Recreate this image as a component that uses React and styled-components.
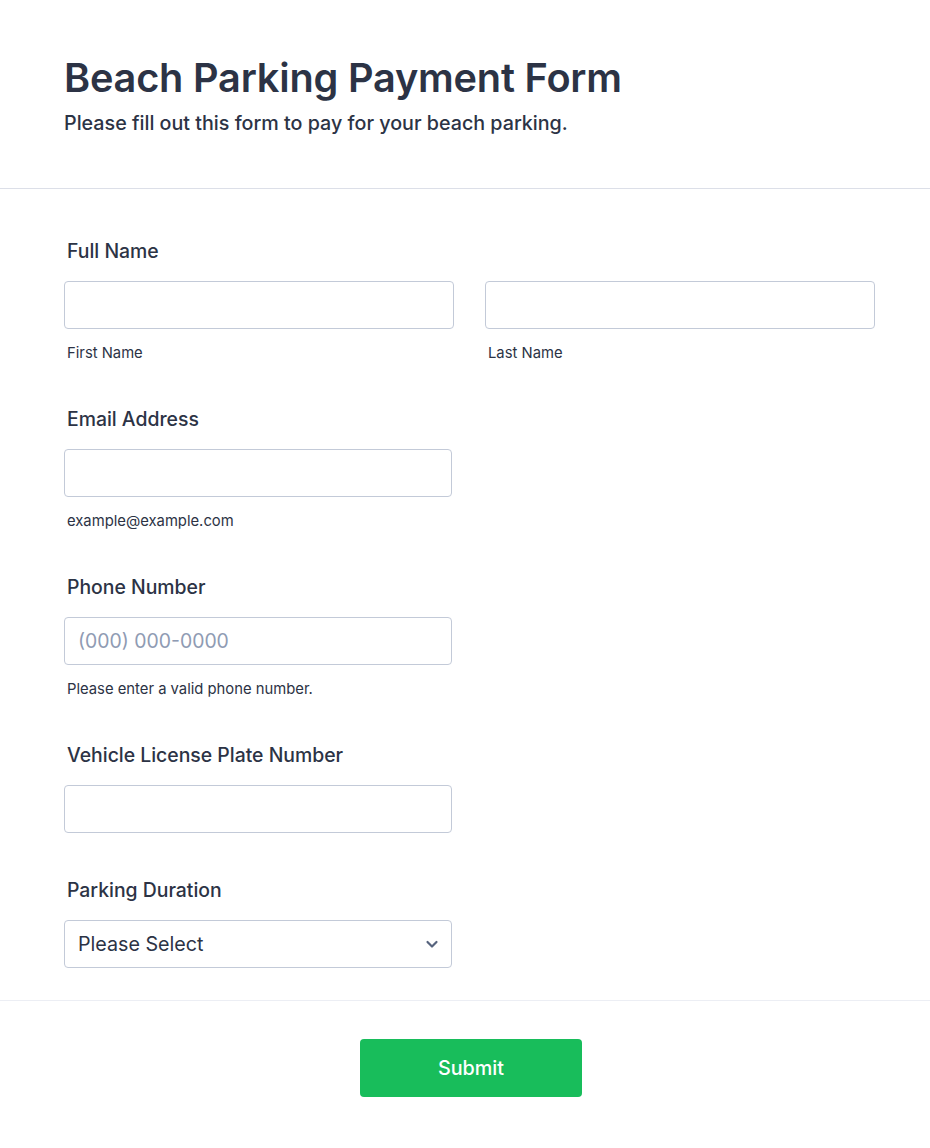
import React from "react"
import styled, { createGlobalStyle } from "styled-components"

const GlobalStyle = createGlobalStyle`
  html, body {
    margin: 0;
    padding: 0;
    background: #ffffff;
  }
  body {
    font-family: Inter, "Noto Sans", "Liberation Sans", sans-serif;
    color: #2c3345;
  }
  * {
    box-sizing: border-box;
  }
`

const Page = styled.div`
  width: 930px;
  min-height: 1148px;
  background: #ffffff;
  display: flex;
  flex-direction: column;
`

const Header = styled.header`
  padding: 54px 64px 53px;
  border-bottom: 1px solid #dcdfe8;
`

const Title = styled.h1`
  margin: 0;
  font-size: 39.7px;
  line-height: 48px;
  font-weight: 600;
  letter-spacing: -0.2px;
  color: #2c3345;
`

const Subtitle = styled.p`
  margin: 9px 0 0;
  font-size: 19.7px;
  line-height: 24px;
  font-weight: 500;
  color: #2c3345;
`

const Body = styled.section`
  padding: 50px 55px 32px 64px;
  display: flex;
  flex-direction: column;
  gap: 45px;
  border-bottom: 1px solid #eceef4;
`

const Field = styled.div`
  display: flex;
  flex-direction: column;
  width: ${({ $wide }) => ($wide ? "811px" : "388px")};
`

const Label = styled.label`
  display: block;
  padding-left: 3px;
  margin-bottom: 18px;
  font-size: 19.4px;
  line-height: 24px;
  font-weight: 500;
  color: #2c3345;
`

const Row = styled.div`
  display: grid;
  grid-template-columns: 390px 390px;
  column-gap: 31px;
`

const Column = styled.div`
  display: flex;
  flex-direction: column;
`

const Input = styled.input`
  width: 100%;
  height: 48px;
  border: 1px solid #c3cad8;
  border-radius: 4px;
  padding: 0 13px;
  font-family: inherit;
  font-size: 19.4px;
  color: #2c3345;
  background: #ffffff;
  outline: none;

  &::placeholder {
    color: #8f9bb3;
  }
`

const SubLabel = styled.span`
  display: block;
  margin-top: 15px;
  padding-left: 3px;
  font-size: 14.8px;
  line-height: 18px;
  color: #2c3345;
`

const SelectBox = styled.div`
  position: relative;
  width: 100%;
  height: 48px;
`

const Select = styled.select`
  appearance: none;
  width: 100%;
  height: 48px;
  border: 1px solid #c3cad8;
  border-radius: 4px;
  padding: 0 40px 0 13px;
  font-family: inherit;
  font-size: 19.7px;
  color: #2c3345;
  background: #ffffff;
  outline: none;
`

const Chevron = styled.svg`
  position: absolute;
  right: 13px;
  top: 50%;
  transform: translateY(-50%);
  pointer-events: none;
`

const Footer = styled.footer`
  display: flex;
  justify-content: center;
  padding: 38px 0 50px 12px;
`

const SubmitButton = styled.button`
  width: 222px;
  height: 58px;
  border: none;
  border-radius: 4px;
  background: #18bd5b;
  color: #ffffff;
  font-family: inherit;
  font-size: 19.8px;
  font-weight: 500;
  cursor: pointer;
`

const TextField = ({ label, sub, placeholder }) => (
  <Field>
    <Label>{label}</Label>
    <Input type="text" placeholder={placeholder} />
    {sub && <SubLabel>{sub}</SubLabel>}
  </Field>
)

export default function App() {
  return (
    <Page>
      <GlobalStyle />
      <Header>
        <Title>Beach Parking Payment Form</Title>
        <Subtitle>Please fill out this form to pay for your beach parking.</Subtitle>
      </Header>
      <Body>
        <Field $wide>
          <Label>Full Name</Label>
          <Row>
            <Column>
              <Input type="text" />
              <SubLabel>First Name</SubLabel>
            </Column>
            <Column>
              <Input type="text" />
              <SubLabel>Last Name</SubLabel>
            </Column>
          </Row>
        </Field>
        <TextField label="Email Address" sub="example@example.com" />
        <TextField
          label="Phone Number"
          sub="Please enter a valid phone number."
          placeholder="(000) 000-0000"
        />
        <TextField label="Vehicle License Plate Number" />
        <Field>
          <Label>Parking Duration</Label>
          <SelectBox>
            <Select defaultValue="">
              <option value="">Please Select</option>
              <option>1 Hour</option>
              <option>2 Hours</option>
              <option>Half Day</option>
              <option>Full Day</option>
            </Select>
            <Chevron width="14" height="14" viewBox="0 0 14 14">
              <path
                d="M2.5 5 L7 9.5 L11.5 5"
                fill="none"
                stroke="#57647e"
                strokeWidth="2.2"
                strokeLinecap="round"
                strokeLinejoin="round"
              />
            </Chevron>
          </SelectBox>
        </Field>
      </Body>
      <Footer>
        <SubmitButton type="button">Submit</SubmitButton>
      </Footer>
    </Page>
  )
}
